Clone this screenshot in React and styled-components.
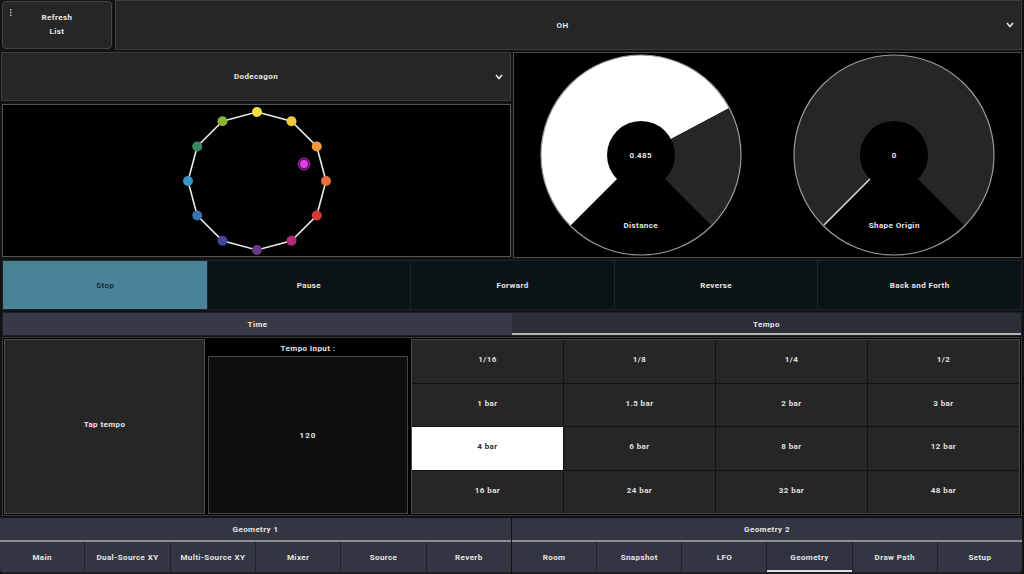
import styled, { createGlobalStyle } from "styled-components";

const GlobalStyle = createGlobalStyle`
	html, body {
		margin: 0;
		padding: 0;
		background: #121212;
	}
	* {
		box-sizing: border-box;
	}
`;

const Page = styled.div`
	width: 1024px;
	height: 574px;
	display: flex;
	flex-direction: column;
	overflow: hidden;
	font-family: Roboto, "Liberation Sans", sans-serif;
	font-weight: 700;
	font-size: 8px;
	letter-spacing: 0.4px;
	color: #e6e6e6;
`;

const TopRow = styled.div`
	height: 50px;
	display: flex;
	gap: 3px;
	padding: 0 2px;
`;

const RefreshButton = styled.div`
	position: relative;
	width: 110px;
	margin: 1px 0;
	background: #262626;
	border: 1px solid #444;
	border-radius: 4px;
	display: flex;
	flex-direction: column;
	align-items: center;
	justify-content: center;
	gap: 6px;
	line-height: 8px;
`;

const Dots = styled.svg`
	position: absolute;
	top: 7px;
	left: 7px;
`;

const Dropdown = styled.div`
	flex: ${(p) => (p.$grow ? 1 : "none")};
	height: ${(p) => p.$height || "auto"};
	background: #262626;
	border: 1px solid #3c3c3c;
	display: flex;
	align-items: center;
	justify-content: center;
	position: relative;
	padding-right: ${(p) => p.$shift || 0}px;
`;

const Chevron = styled.svg`
	position: absolute;
	right: 7px;
	top: 50%;
	margin-top: -3px;
`;

const MidRow = styled.div`
	height: 206px;
	margin-top: 2px;
	display: flex;
	gap: 2px;
	padding: 0 2px 0 1px;
`;

const LeftColumn = styled.div`
	width: 510px;
	display: flex;
	flex-direction: column;
	gap: 3px;
`;

const Canvas = styled.div`
	flex: 1;
	margin-left: 1px;
	margin-bottom: 1px;
	background: #000;
	border: 1px solid #555;
	display: flex;
	align-items: center;
	justify-content: center;
`;

const KnobPanel = styled.div`
	flex: 1;
	background: #000;
	border: 1px solid #4a4a4a;
	display: grid;
	grid-template-columns: 1fr 1fr;
	align-items: center;
	justify-items: center;
`;

const KnobBox = styled.div`
	position: relative;
	width: 202px;
	height: 202px;
`;

const KnobValue = styled.div`
	position: absolute;
	left: 0;
	right: 0;
	top: 97px;
	text-align: center;
`;

const KnobLabel = styled.div`
	position: absolute;
	left: 0;
	right: 0;
	top: 167px;
	text-align: center;
`;

const Transport = styled.div`
	height: 50px;
	margin: 2px 2px 0;
	display: grid;
	grid-template-columns: repeat(5, 1fr);
	background: #0c1216;
	border: 1px solid #1d2327;
`;

const TransportButton = styled.div`
	display: flex;
	align-items: center;
	justify-content: center;
	background: ${(p) => (p.$active ? "#4a8399" : "#0c1317")};
	color: ${(p) => (p.$active ? "#1b2d35" : "#e6e6e6")};
	border-left: 1px solid ${(p) => (p.$first ? "transparent" : "#1c2428")};
`;

const TabRow = styled.div`
	height: 24px;
	margin: 2px 2px 0;
	display: grid;
	grid-template-columns: 509px 1fr;
	border: 1px solid #1e2026;
`;

const Tab = styled.div`
	display: flex;
	align-items: center;
	justify-content: center;
	background: ${(p) => (p.$selected ? "#2b2e36" : "#363a46")};
	border-bottom: 2px solid ${(p) => (p.$selected ? "#b4b4b4" : "transparent")};
	padding-top: 2px;
`;

const TempoPanel = styled.div`
	height: 179px;
	margin: 1px 2px 0;
	background: #000;
	border: 1px solid #3a3a3a;
	display: flex;
	padding: 1px;
	gap: 3px;
`;

const TapButton = styled.div`
	width: 201px;
	margin-top: 0;
	background: #262626;
	border: 1px solid #4c4c4c;
	display: flex;
	align-items: center;
	justify-content: center;
	padding-bottom: 5px;
`;

const InputColumn = styled.div`
	width: 200px;
	display: flex;
	flex-direction: column;
`;

const InputLabel = styled.div`
	height: 17px;
	display: flex;
	align-items: center;
	justify-content: center;
	padding-top: 1px;
`;

const InputBox = styled.div`
	flex: 1;
	background: #0f0f0f;
	border: 1px solid #474747;
	display: flex;
	align-items: center;
	justify-content: center;
	letter-spacing: 1px;
`;

const TempoGrid = styled.div`
	flex: 1;
	display: grid;
	grid-template-columns: repeat(4, 1fr);
	grid-template-rows: repeat(4, 1fr);
	background: #121212;
	border: 1px solid #474747;
	gap: 1px;
`;

const TempoCell = styled.div`
	display: flex;
	align-items: center;
	justify-content: center;
	background: ${(p) => (p.$selected ? "#ffffff" : "#262626")};
	color: ${(p) => (p.$selected ? "#2a2a2a" : "#e0e0e0")};
	padding-bottom: 3px;
`;

const BottomNav = styled.div`
	height: 56px;
	margin-top: 2px;
	display: grid;
	grid-template-columns: 511px 1fr;
	gap: 1px;
	padding-right: 2px;
`;

const NavHalf = styled.div`
	display: flex;
	flex-direction: column;
	background: #333642;
	border-radius: ${(p) => (p.$left ? "0 0 0 6px" : "0 0 6px 0")};
	overflow: hidden;
`;

const NavHeader = styled.div`
	height: 24px;
	display: flex;
	align-items: center;
	justify-content: center;
	border-bottom: 2px solid #8e8e8e;
	background: #333642;
`;

const NavTabs = styled.div`
	flex: 1;
	display: grid;
	grid-template-columns: repeat(6, 1fr);
	background: #1e2027;
	gap: 1px;
`;

const NavTab = styled.div`
	display: flex;
	align-items: center;
	justify-content: center;
	background: ${(p) => (p.$selected ? "#2f3240" : "#333642")};
	border-bottom: 2px solid ${(p) => (p.$selected ? "#e0e0e0" : "transparent")};
	padding-top: 2px;
	margin-bottom: 2px;
`;

const polar = (r, deg) => {
	const a = (deg * Math.PI) / 180;
	return [r * Math.sin(a), -r * Math.cos(a)];
};

const sector = (r, a0, a1) => {
	const [x0, y0] = polar(r, a0);
	const [x1, y1] = polar(r, a1);
	const large = a1 - a0 > 180 ? 1 : 0;
	return `M0 0 L${x0} ${y0} A${r} ${r} 0 ${large} 1 ${x1} ${y1} Z`;
};

function Knob({ value, label, fillTo }) {
	const [lx0, ly0] = polar(34, -135);
	const [lx1, ly1] = polar(99, -135);
	return (
		<KnobBox>
			<svg width="202" height="202" viewBox="-101 -101 202 202">
				{fillTo > -135 && <path d={sector(100, -135, fillTo)} fill="#ffffff" />}
				<path d={sector(100, Math.max(fillTo, -135), 135)} fill="#262626" />
				<circle cx="0" cy="0" r="34" fill="#000" />
				<circle cx="0" cy="0" r="100" fill="none" stroke="#9a9a9a" strokeWidth="1.2" />
				{fillTo <= -135 && (
					<line x1={lx0} y1={ly0} x2={lx1} y2={ly1} stroke="#d8d8d8" strokeWidth="1.6" />
				)}
			</svg>
			<KnobValue>{value}</KnobValue>
			<KnobLabel>{label}</KnobLabel>
		</KnobBox>
	);
}

const dotColors = [
	"#f0e040",
	"#f5c640",
	"#ef9a40",
	"#e6703a",
	"#d93a35",
	"#b02a78",
	"#6a3a8a",
	"#45489a",
	"#3a70b0",
	"#3a96c0",
	"#3a8a60",
	"#8ab43a",
];

function Dodecagon() {
	const pts = dotColors.map((c, i) => polar(69, i * 30));
	const poly = pts.map((p) => p.join(",")).join(" ");
	return (
		<svg width="150" height="150" viewBox="-75 -75 150 150">
			<polygon points={poly} fill="none" stroke="#e8e8e8" strokeWidth="1.6" />
			{pts.map(([x, y], i) => (
				<circle key={i} cx={x} cy={y} r="5" fill={dotColors[i]} />
			))}
			<circle cx="47" cy="-17" r="6" fill="#5a1060" stroke="#a02aa0" strokeWidth="1" />
			<circle cx="47" cy="-17" r="4" fill="#e040e0" />
		</svg>
	);
}

function ChevronIcon() {
	return (
		<Chevron width="8" height="6" viewBox="0 0 8 6">
			<polyline points="1,1 4,4.5 7,1" fill="none" stroke="#e6e6e6" strokeWidth="1.6" />
		</Chevron>
	);
}

const transport = ["Stop", "Pause", "Forward", "Reverse", "Back and Forth"];
const tempos = [
	"1/16", "1/8", "1/4", "1/2",
	"1 bar", "1.5 bar", "2 bar", "3 bar",
	"4 bar", "6 bar", "8 bar", "12 bar",
	"16 bar", "24 bar", "32 bar", "48 bar",
];
const navLeft = ["Main", "Dual-Source XY", "Multi-Source XY", "Mixer", "Source", "Reverb"];
const navRight = ["Room", "Snapshot", "LFO", "Geometry", "Draw Path", "Setup"];

export default function App() {
	return (
		<>
			<GlobalStyle />
			<Page>
				<TopRow>
					<RefreshButton>
						<Dots width="2" height="7" viewBox="0 0 2 7">
							<rect x="0" y="0" width="1.4" height="1.4" fill="#ccc" />
							<rect x="0" y="2.8" width="1.4" height="1.4" fill="#ccc" />
							<rect x="0" y="5.6" width="1.4" height="1.4" fill="#ccc" />
						</Dots>
						<span>Refresh</span>
						<span>List</span>
					</RefreshButton>
					<Dropdown $grow $shift={12}>
						OH
						<ChevronIcon />
					</Dropdown>
				</TopRow>
				<MidRow>
					<LeftColumn>
						<Dropdown $height="49px">
							Dodecagon
							<ChevronIcon />
						</Dropdown>
						<Canvas>
							<Dodecagon />
						</Canvas>
					</LeftColumn>
					<KnobPanel>
						<Knob value="0.485" label="Distance" fillTo={62} />
						<Knob value="0" label="Shape Origin" fillTo={-135} />
					</KnobPanel>
				</MidRow>
				<Transport>
					{transport.map((t, i) => (
						<TransportButton key={t} $active={i === 0} $first={i === 0}>
							{t}
						</TransportButton>
					))}
				</Transport>
				<TabRow>
					<Tab>Time</Tab>
					<Tab $selected>Tempo</Tab>
				</TabRow>
				<TempoPanel>
					<TapButton>Tap tempo</TapButton>
					<InputColumn>
						<InputLabel>Tempo Input :</InputLabel>
						<InputBox>120</InputBox>
					</InputColumn>
					<TempoGrid>
						{tempos.map((t) => (
							<TempoCell key={t} $selected={t === "4 bar"}>
								{t}
							</TempoCell>
						))}
					</TempoGrid>
				</TempoPanel>
				<BottomNav>
					<NavHalf $left>
						<NavHeader>Geometry 1</NavHeader>
						<NavTabs>
							{navLeft.map((t) => (
								<NavTab key={t}>{t}</NavTab>
							))}
						</NavTabs>
					</NavHalf>
					<NavHalf>
						<NavHeader>Geometry 2</NavHeader>
						<NavTabs>
							{navRight.map((t) => (
								<NavTab key={t} $selected={t === "Geometry"}>
									{t}
								</NavTab>
							))}
						</NavTabs>
					</NavHalf>
				</BottomNav>
			</Page>
		</>
	);
}
